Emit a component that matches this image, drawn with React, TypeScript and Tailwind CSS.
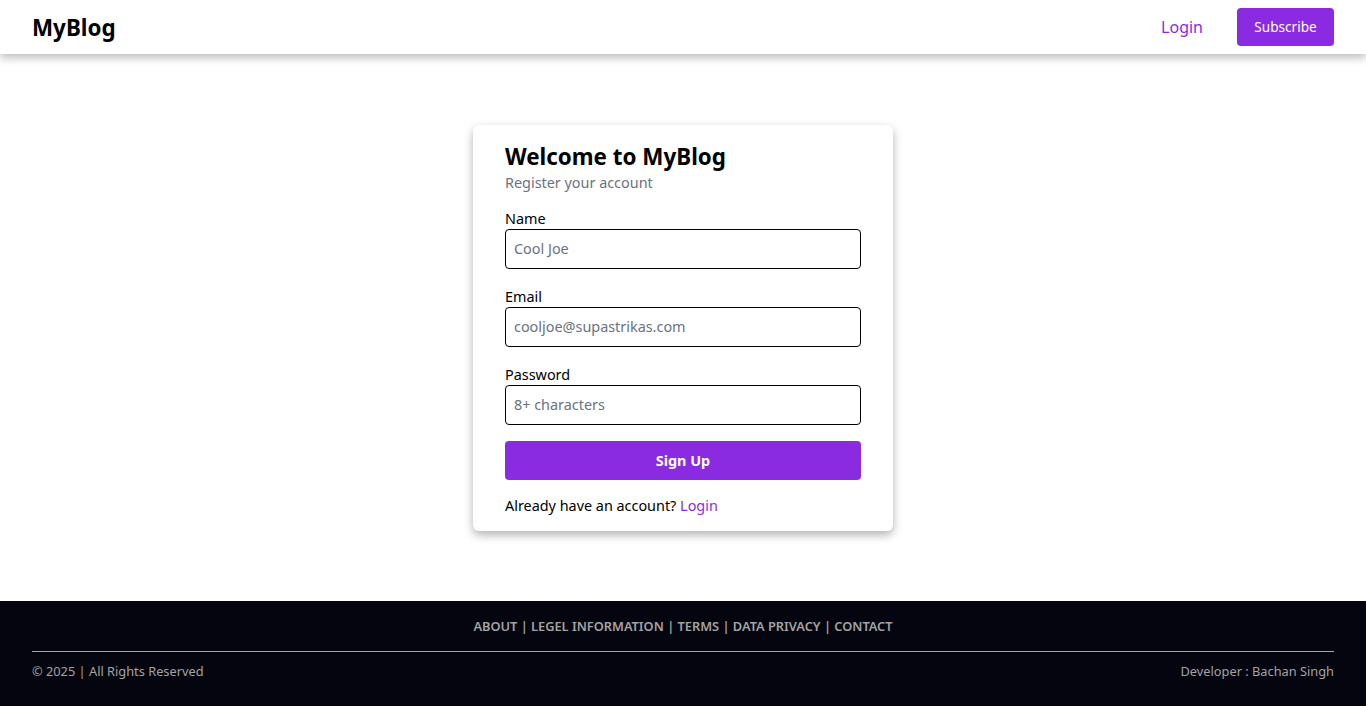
import React from 'react'

export default function App() {
  return (
    <div className="min-h-screen flex flex-col bg-white text-black" style={{ fontFamily: '"Noto Sans", sans-serif' }}>
      {/* Navigation */}
      <header className="h-[54px] flex items-center justify-between px-8 bg-white shadow-[0_4px_8px_rgba(0,0,0,0.25)] relative z-10">
        <div className="text-[22.4px] font-bold pt-px">MyBlog</div>
        <div className="flex items-center gap-[34px]">
          <a href="#" className="text-base text-[#8a2be2]">Login</a>
          <button className="h-[38px] w-[97px] rounded bg-[#8a2be2] text-white text-[13.6px]">Subscribe</button>
        </div>
      </header>

      {/* Register card */}
      <main className="flex-1 flex items-center justify-center">
        <div className="w-[420px] bg-white rounded-md shadow-[0_4px_10px_rgba(0,0,0,0.3)] px-8 pt-4 pb-[15px]">
          <h1 className="text-[22.4px] font-bold leading-8">Welcome to MyBlog</h1>
          <p className="text-[14.4px] text-gray-500 leading-5">Register your account</p>

          <form className="mt-4">
            <label className="block text-[14.4px] leading-5">Name</label>
            <input
              className="w-full h-10 border border-black rounded px-2 text-[14.4px] placeholder:text-gray-500 outline-none"
              placeholder="Cool Joe"
            />
            <label className="block text-[14.4px] leading-5 mt-[18px]">Email</label>
            <input
              className="w-full h-10 border border-black rounded px-2 text-[14.4px] placeholder:text-gray-500 outline-none"
              placeholder="cooljoe@supastrikas.com"
            />
            <label className="block text-[14.4px] leading-5 mt-[18px]">Password</label>
            <input
              type="password"
              className="w-full h-10 border border-black rounded px-2 text-[14.4px] placeholder:text-gray-500 outline-none"
              placeholder="8+ characters"
            />
            <button className="w-full h-[39px] mt-4 pt-px rounded bg-[#8a2be2] text-white text-[14.4px] font-bold">Sign Up</button>
          </form>

          <p className="mt-4 text-[14.4px] leading-5">
            Already have an account? <a href="#" className="text-[#8a2be2]">Login</a>
          </p>
        </div>
      </main>

      {/* Footer */}
      <footer className="h-[105px] bg-[#05050f] text-[#a3a3a3] px-8">
        <div className="text-center text-[12.8px] font-semibold pt-4 pb-[15px]">
          ABOUT | LEGEL INFORMATION | TERMS | DATA PRIVACY | CONTACT
        </div>
        <div className="border-t border-[#a3a3a3]" />
        <div className="flex justify-between text-[12.8px] pt-[10px]">
          <span>© 2025 | All Rights Reserved</span>
          <span>Developer : Bachan Singh</span>
        </div>
      </footer>
    </div>
  )
}
